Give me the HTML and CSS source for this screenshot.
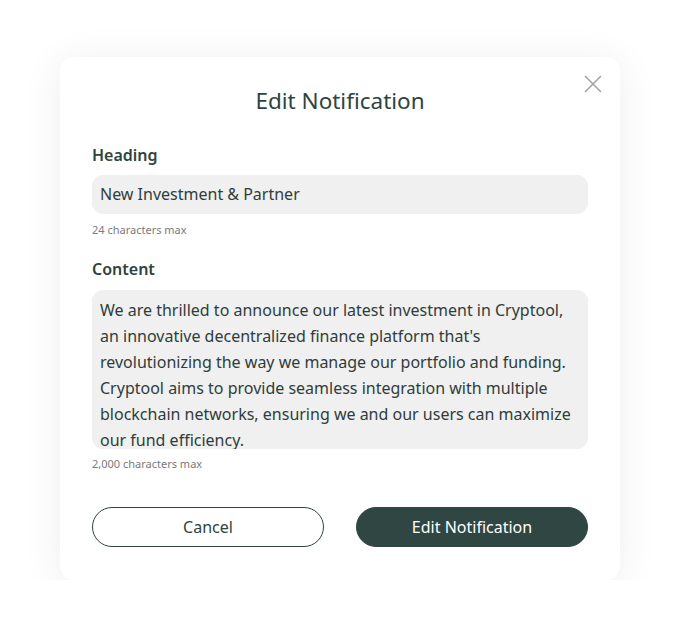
FILE: index.html
```html
<!DOCTYPE html>
<html>
<head>
<meta charset="utf-8">
<link rel="stylesheet" href="styles.css">
</head>
<body>
<div class="page">
  <div class="modal">
    <button class="close" aria-label="Close">
      <svg width="18" height="18" viewBox="0 0 18 18"><path d="M1 1L17 17M17 1L1 17" stroke="#a3a3a3" stroke-width="1.6" fill="none"/></svg>
    </button>
    <h1 class="title">Edit Notification</h1>
    <div class="field">
      <label class="label">Heading</label>
      <div class="input">New Investment &amp; Partner</div>
      <div class="hint">24 characters max</div>
    </div>
    <div class="field">
      <label class="label">Content</label>
      <div class="textarea">We are thrilled to announce our latest investment in Cryptool, an innovative decentralized finance platform that's revolutionizing the way we manage our portfolio and funding. Cryptool aims to provide seamless integration with multiple blockchain networks, ensuring we and our users can maximize our fund efficiency.</div>
      <div class="hint">2,000 characters max</div>
    </div>
    <div class="actions">
      <button class="btn btn-outline">Cancel</button>
      <button class="btn btn-solid">Edit Notification</button>
    </div>
  </div>
</div>
</body>
</html>
```
FILE: styles.css
```css
* { box-sizing: border-box; }
html, body { margin: 0; padding: 0; background: #ffffff; }
body { font-family: "Noto Sans", "Open Sans", sans-serif; color: #2f4440; }
.page { padding-top: 57px; display: flex; justify-content: center; }
.modal {
  position: relative;
  width: 560px;
  background: #fff;
  border-radius: 14px;
  box-shadow: 0 4px 40px rgba(0,0,0,0.07);
  padding: 24px 32px 33px;
}
.close {
  position: absolute;
  top: 18px; right: 18px;
  border: 0; background: none; padding: 0;
  width: 18px; height: 18px; cursor: pointer;
}
.close svg { display: block; }
.title {
  margin: 0 0 22px;
  text-align: center;
  font-size: 22.5px;
  font-weight: 400;
  line-height: 40px;
  color: #2f4440;
}
.field { display: flex; flex-direction: column; margin-bottom: 19px; }
.label { font-size: 16px; font-weight: 600; line-height: 24px; margin-bottom: 8px; color: #2f4440; }
.field + .field .label { margin-bottom: 9px; }
.field + .field .hint { margin-top: 7px; }
.input {
  background: #f0f0f0;
  border-radius: 11px;
  height: 39px;
  padding: 0 8px;
  font-size: 16px;
  line-height: 39px;
  color: #2f3d3a;
}
.textarea {
  background: #f0f0f0;
  border-radius: 11px;
  height: 159px;
  overflow: hidden;
  padding: 7px 8px 0;
  font-size: 16px;
  line-height: 26px;
  color: #2f3d3a;
}
.hint { font-size: 11px; color: #7a7a7a; margin-top: 8px; line-height: 16px; }
.actions { display: flex; gap: 32px; margin-top: 35px; }
.btn {
  flex: 1;
  height: 40px;
  border-radius: 20px;
  font-family: "Noto Sans", "Open Sans", sans-serif;
  font-size: 16px;
  cursor: pointer;
}
.btn-outline { background: #fff; border: 1px solid #2f4440; color: #2f4440; }
.btn-solid { background: #2f4642; border: 1px solid #2f4642; color: #fff; }
```
